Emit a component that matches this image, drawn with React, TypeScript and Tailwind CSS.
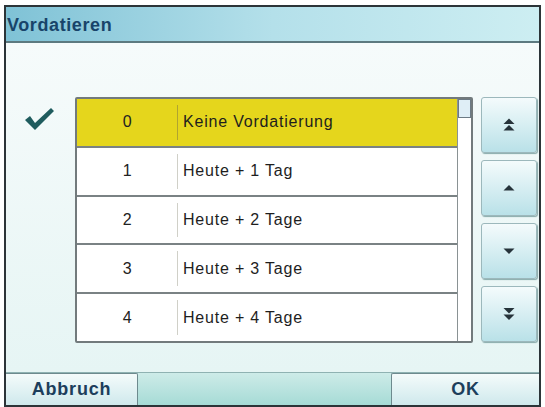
import React from "react";

const rows = [
  { n: "0", label: "Keine Vordatierung" },
  { n: "1", label: "Heute + 1 Tag" },
  { n: "2", label: "Heute + 2 Tage" },
  { n: "3", label: "Heute + 3 Tage" },
  { n: "4", label: "Heute + 4 Tage" },
];

function Arrow({ kind }: { kind: "first" | "up" | "down" | "last" }) {
  return (
    <svg width="16" height="16" viewBox="0 0 16 16" fill="#26333a">
      {kind === "first" && (
        <>
          <path d="M8 1.5 L13.5 7 L2.5 7 Z" />
          <path d="M8 8 L13.5 13.5 L2.5 13.5 Z" />
        </>
      )}
      {kind === "up" && <path d="M8 5 L13.5 10.5 L2.5 10.5 Z" />}
      {kind === "down" && <path d="M2.5 5.5 L13.5 5.5 L8 11 Z" />}
      {kind === "last" && (
        <>
          <path d="M2.5 2 L13.5 2 L8 7.5 Z" />
          <path d="M2.5 8.5 L13.5 8.5 L8 14 Z" />
        </>
      )}
    </svg>
  );
}

export default function App() {
  return (
    <div
      className="w-[545px] h-[407px] bg-white pt-[5px] px-[4px] overflow-hidden"
      style={{ fontFamily: '"Liberation Sans", Arial, sans-serif' }}
    >
      <div className="h-[402px] flex flex-col border-2 border-[#2c3438] bg-[#eef8f8]">
        {/* TITLE */}
        <div className="h-[36px] shrink-0 flex items-center px-[1px] pt-[2px] bg-gradient-to-r from-[#7fc2d6] via-[#b4e0ea] to-[#cdeef2] border-b-2 border-[#5d7a80]">
          <span className="text-[18px] font-bold text-[#18446a] tracking-[0.6px]">
            Vordatieren
          </span>
        </div>

        {/* CONTENT */}
        <div className="flex-1 flex bg-gradient-to-b from-[#f6fbfb] to-[#e6f5f4] pt-[54px] pl-[17px]">
          <div className="w-[52px] pt-[9px]">
            <svg width="32" height="26" viewBox="0 0 32 26">
              <path
                d="M2 14 L7 10 L12 17 L28 2 L31 5 L12 24 Z"
                fill="#1f5c5e"
              />
            </svg>
          </div>

          <div className="flex h-[246px] border-2 border-[#727a7c] rounded-[2px] bg-white">
            <div className="w-[380px] flex flex-col">
              {rows.map((r, i) => (
                <div
                  key={r.n}
                  className={`flex-1 flex items-center text-[16px] tracking-[0.8px] ${
                    i === 0 ? "bg-[#e5d61c]" : "bg-white"
                  } ${i < rows.length - 1 ? "border-b-2 border-[#7a8284]" : ""}`}
                >
                  <div className="w-[100px] text-center text-[#222] pl-[1px]">{r.n}</div>
                  <div
                    className={`self-stretch my-[6px] border-l ${
                      i === 0 ? "border-[#b0a430]" : "border-[#d0d0c8]"
                    }`}
                  />
                  <div className="pl-[5px] text-[#1e1e1e]">{r.label}</div>
                </div>
              ))}
            </div>
            <div className="w-[14px] border-l border-[#8a9294] bg-white">
              <div className="h-[19px] bg-[#dfeef6] border border-[#6c7a84]" />
            </div>
          </div>

          <div className="ml-[8px] w-[56px] flex flex-col gap-[7px]">
            {(["first", "up", "down", "last"] as const).map((k) => (
              <div
                key={k}
                className="h-[56px] flex items-center justify-center rounded-[3px] border border-[#9cb8bc] bg-gradient-to-b from-[#f4fbfc] to-[#b9e1e8] shadow-[1px_1px_1px_#8aa]"
              >
                <Arrow kind={k} />
              </div>
            ))}
          </div>
        </div>

        {/* BOTTOM BAR */}
        <div className="h-[33px] shrink-0 flex bg-gradient-to-b from-[#cdebe8] to-[#a6dbd6] border-t border-[#8fb2b2]">
          <div className="w-[132px] flex items-center justify-center bg-gradient-to-b from-[#f4fbfb] to-[#cfe9ec] border-r border-t border-[#6d8a8e] rounded-tr-[2px]">
            <span className="text-[18px] font-bold text-[#1c3e5c] tracking-[0.8px]">Abbruch</span>
          </div>
          <div className="flex-1" />
          <div className="w-[148px] flex items-center justify-center bg-gradient-to-b from-[#f4fbfb] to-[#cfe9ec] border-l border-t border-[#6d8a8e] rounded-tl-[2px]">
            <span className="text-[18px] font-bold text-[#1c3e5c] tracking-[0.8px]">OK</span>
          </div>
        </div>
      </div>
    </div>
  );
}
